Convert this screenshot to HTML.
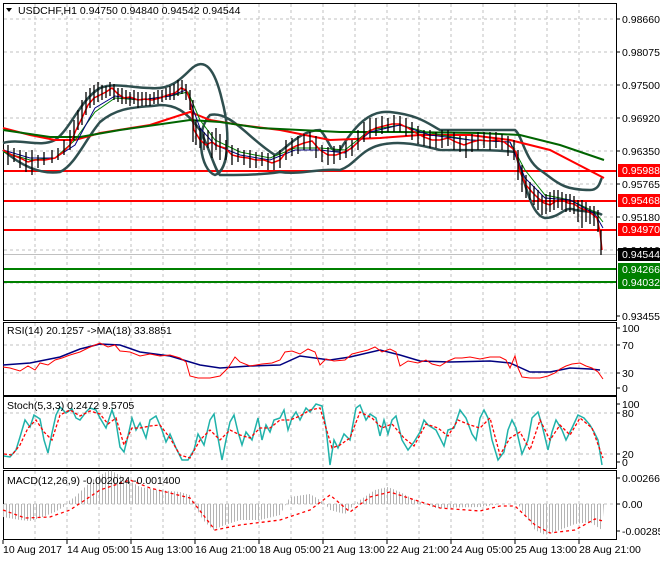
<!DOCTYPE html>
<html><head><meta charset="utf-8"><style>
body{margin:0;background:#fff;width:660px;height:560px;overflow:hidden;font-family:"Liberation Sans",sans-serif;}
svg text{font-family:"Liberation Sans",sans-serif;font-size:10.5px;}
</style></head><body>
<svg width="660" height="560" viewBox="0 0 660 560" xmlns="http://www.w3.org/2000/svg">
<defs>
<pattern id="hs" width="3" height="10" patternUnits="userSpaceOnUse"><rect x="0" y="0" width="1" height="10" fill="#b4b4b4"/></pattern>
</defs>
<rect width="660" height="560" fill="#fff"/>
<!-- grids -->
<g stroke="#c0c0c0" stroke-dasharray="3,3" stroke-width="1">
<path d="M35 4V320M67 4V320M99 4V320M131 4V320M163 4V320M195 4V320M227 4V320M259 4V320M291 4V320M323 4V320M355 4V320M387 4V320M419 4V320M451 4V320M483 4V320M515 4V320M547 4V320M579 4V320"/>
<path d="M35 323V395M67 323V395M99 323V395M131 323V395M163 323V395M195 323V395M227 323V395M259 323V395M291 323V395M323 323V395M355 323V395M387 323V395M419 323V395M451 323V395M483 323V395M515 323V395M547 323V395M579 323V395"/>
<path d="M35 398V468M67 398V468M99 398V468M131 398V468M163 398V468M195 398V468M227 398V468M259 398V468M291 398V468M323 398V468M355 398V468M387 398V468M419 398V468M451 398V468M483 398V468M515 398V468M547 398V468M579 398V468"/>
<path d="M35 471V539M67 471V539M99 471V539M131 471V539M163 471V539M195 471V539M227 471V539M259 471V539M291 471V539M323 471V539M355 471V539M387 471V539M419 471V539M451 471V539M483 471V539M515 471V539M547 471V539M579 471V539"/>
<path d="M4 19H616M4 52H616M4 85H616M4 118H616M4 151H616M4 184H616M4 217H616M4 250H616M4 283H616"/>
<path d="M4 345H616M4 373H616M4 413H616M4 454H616M4 504H616"/>
</g>
<!-- panel borders -->
<g fill="none" stroke="#000" stroke-width="1">
<rect x="3.5" y="3.5" width="613" height="317"/>
<rect x="3.5" y="322.5" width="613" height="73"/>
<rect x="3.5" y="396.5" width="613" height="72"/>
<rect x="3.5" y="470.5" width="613" height="69"/>
</g>
<!-- horizontal levels -->
<g stroke-width="2">
<path d="M4 171H616M4 201H616M4 230H616" stroke="#ff0000"/>
<path d="M4 269H616M4 282H616" stroke="#008000"/>
</g>
<path d="M4 254.5H616" stroke="#c0c0c0"/>
<!-- bollinger -->
<g fill="none" stroke="#2f4f4f" stroke-width="2.5">
<path d="M3 143 C20 138,40 148,55 140 C70 130,80 100,100 88 C115 82,130 88,150 88 C170 90,180 80,190 70 C205 55,215 70,222 100 C230 130,230 170,215 175 C200 170,195 130,210 115 C230 110,250 140,275 155 C285 150,300 130,320 130 C330 140,330 155,340 150 C355 125,370 110,390 112 C420 115,430 125,440 130 C470 130,500 130,515 130 C522 135,525 160,540 170 C555 180,560 190,590 190 C600 190,600 180,602 178"/>
<path d="M3 150 C20 165,40 175,60 172 C75 165,85 140,100 122 C120 105,140 108,160 105 C175 105,185 110,200 130 C210 150,215 170,220 175 C240 175,260 175,280 172 C300 175,320 168,340 170 C355 165,360 150,380 145 C400 140,420 145,440 150 C470 150,500 150,515 152 C525 180,530 215,545 218 C560 218,565 205,575 210 C590 212,598 212,602 215"/>
</g>
<!-- long MAs -->
<path d="M3 128 L30 135 L55 140 L75 140 L100 133 L150 125 L190 112 L210 120 L240 125 L280 130 L330 140 L380 138 L420 135 L470 135 L510 140 L550 150 L604 178" fill="none" stroke="#ff0000" stroke-width="2"/>
<path d="M3 130 L50 137 L80 137 L120 130 L190 120 L220 122 L260 128 L300 130 L340 132 L400 132 L480 133 L520 135 L560 145 L604 160" fill="none" stroke="#006400" stroke-width="2"/>
<!-- short MAs -->
<path d="M3 152 L30 160 L55 158 L75 140 L95 112 L115 98 L140 100 L170 96 L188 92 L200 120 L215 140 L240 152 L270 158 L295 148 L320 148 L345 150 L370 130 L400 125 L430 133 L470 140 L510 142 L525 170 L545 195 L570 200 L595 212 L603 222" fill="none" stroke="#008000" stroke-width="1"/>
<path d="M3 150 L30 158 L55 158 L75 145 L95 108 L115 96 L140 100 L170 96 L186 90 L200 128 L215 145 L240 155 L270 160 L295 150 L320 150 L345 153 L370 132 L400 125 L430 135 L470 140 L510 142 L525 178 L545 198 L570 200 L595 214 L603 228" fill="none" stroke="#000080" stroke-width="1"/>
<!-- price -->
<path d="M3 150 L12 155 L20 158 L28 162 L35 160 L45 160 L55 158 L62 153 L70 145 L76 130 L82 118 L88 105 L94 98 L100 95 L106 92 L112 88 L118 94 L124 98 L130 97 L138 100 L145 99 L152 100 L160 98 L168 95 L175 93 L181 88 L186 90 L190 100 L194 130 L200 140 L206 145 L212 142 L218 146 L225 148 L232 155 L240 157 L248 158 L256 160 L264 160 L272 163 L280 160 L288 150 L296 146 L304 143 L312 141 L320 150 L328 155 L336 155 L344 152 L352 148 L360 140 L368 132 L376 128 L384 126 L392 124 L400 124 L408 128 L416 133 L424 137 L432 140 L440 140 L448 138 L456 142 L464 145 L472 142 L480 140 L488 141 L496 140 L504 142 L512 148 L516 152 L520 172 L526 185 L532 192 L538 198 L544 203 L550 205 L556 201 L562 200 L568 203 L574 204 L580 208 L586 210 L592 214 L597 218 L600 232 L602 250" fill="none" stroke="#ff0000" stroke-width="1.5"/>
<g stroke="#000" stroke-width="1.3">
<path d="M8 145V165M14 148V162M20 150V168M26 152V172M32 150V175M38 155V168M44 152V165M52 150V163M58 148V160M64 140V155M70 130V150M74 120V140M78 110V130M82 100V125M86 92V115M90 88V108M94 85V105M98 82V102M102 85V100M106 86V98M110 82V96M114 84V100M118 88V102M122 88V104M126 90V104M130 92V106M134 90V104M138 92V108M142 92V106M146 92V106M150 94V106M154 92V104M158 90V104M162 90V102M166 88V100M170 86V100M174 84V100M178 80V96M182 80V94M186 84V100M190 90V110M193 100V142M196 120V145M200 128V148M204 132V150M208 130V148M212 132V158M216 128V150M220 134V160M226 140V160M232 145V165M238 148V162M244 150V165M250 150V168M256 152V168M262 152V166M268 153V170M274 155V170M280 150V168M286 140V160M292 138V156M298 136V154M304 134V150M310 132V150M316 136V158M322 145V162M328 147V165M334 146V164M340 145V160M346 142V158M352 140V156M358 130V150M364 122V142M370 118V138M376 118V136M382 116V134M388 118V132M394 115V132M400 116V132M406 118V136M412 122V140M418 126V144M424 130V146M430 130V148M436 132V148M442 130V148M448 130V146M454 132V150M460 136V152M466 136V158M472 134V152M478 132V150M484 132V148M490 132V150M496 132V148M502 134V150M508 136V156M514 140V160M518 150V180M522 165V192M526 175V198M530 182V200M534 186V205M538 190V210M542 195V215M546 194V214M550 192V212M554 190V210M558 190V208M562 192V210M566 194V212M570 194V212M574 196V214M578 200V222M582 200V228M586 202V222M590 206V224M594 206V226M598 210V232M601 230V255"/>
</g>
<!-- RSI -->
<path d="M3 365 L30 363 L60 357 L80 349 L100 344 L120 345 L140 352 L170 356 L200 365 L220 368 L250 366 L280 365 L300 356 L330 360 L350 357 L380 350 L400 355 L420 361 L450 362 L490 361 L510 363 L530 372 L550 372 L570 368 L590 369 L600 370" fill="none" stroke="#000080" stroke-width="1.5"/>
<path d="M3 367 L10 368 L20 371 L28 366 L35 370 L40 363 L48 365 L55 360 L62 358 L70 355 L80 352 L88 348 L95 345 L100 343 L108 347 L115 345 L120 351 L130 352 L140 356 L150 354 L160 356 L170 355 L180 358 L186 362 L190 376 L198 378 L210 378 L220 376 L228 368 L235 357 L240 362 L250 366 L262 364 L272 363 L280 360 L285 352 L292 351 L300 354 L308 349 L315 352 L320 365 L326 359 L334 361 L345 360 L352 354 L360 352 L368 350 L375 347 L382 352 L390 349 L396 352 L400 366 L408 361 L418 363 L426 360 L432 364 L440 366 L448 361 L455 358 L462 358 L470 357 L480 359 L490 357 L500 357 L506 360 L510 368 L515 356 L518 368 L522 377 L530 378 L540 378 L548 376 L555 373 L560 369 L566 366 L572 364 L580 363 L586 366 L592 368 L598 372 L603 379" fill="none" stroke="#ff0000" stroke-width="1"/>
<!-- Stoch -->
<path d="M4 456 L10 457 L16 450 L20 437 L25 420 L30 427 L34 415 L40 419 L44 440 L48 453 L52 433 L56 415 L60 407 L66 413 L72 409 L76 418 L80 420 L86 412 L90 408 L96 410 L100 418 L106 428 L112 410 L116 422 L120 447 L124 452 L128 436 L132 418 L136 430 L140 423 L146 438 L150 420 L156 416 L162 430 L166 442 L170 434 L176 448 L182 460 L188 460 L194 450 L198 434 L204 445 L210 420 L214 414 L218 438 L222 460 L226 440 L230 422 L234 415 L238 432 L242 445 L246 432 L252 440 L258 418 L262 440 L266 425 L270 432 L274 420 L280 418 L284 410 L288 430 L292 418 L296 412 L300 420 L306 408 L310 412 L316 404 L322 406 L326 428 L330 465 L334 440 L338 448 L344 434 L350 440 L356 408 L360 405 L366 420 L370 414 L376 418 L380 436 L384 420 L388 434 L392 420 L396 416 L402 440 L408 450 L414 442 L420 432 L424 420 L428 425 L436 430 L444 446 L448 430 L454 428 L460 410 L466 418 L472 434 L476 440 L480 418 L484 410 L488 418 L492 440 L498 460 L504 452 L508 430 L512 420 L516 428 L522 454 L528 440 L532 418 L538 412 L542 425 L548 450 L552 432 L556 420 L562 430 L566 440 L572 428 L578 415 L584 418 L590 425 L594 432 L598 440 L602 465" fill="none" stroke="#20b2aa" stroke-width="1.5"/>
<path d="M4 454 L12 455 L20 445 L28 428 L36 420 L44 432 L52 440 L60 415 L70 410 L80 416 L90 411 L100 414 L108 424 L116 418 L124 445 L132 428 L140 428 L150 426 L160 425 L170 438 L180 455 L190 458 L200 440 L210 430 L220 440 L230 430 L240 435 L250 438 L260 428 L270 428 L280 420 L290 420 L300 416 L310 410 L320 408 L332 448 L340 445 L350 438 L360 412 L372 418 L382 428 L392 424 L404 438 L414 446 L426 424 L438 428 L448 436 L458 420 L470 425 L480 428 L490 418 L500 455 L510 438 L520 432 L530 450 L540 420 L550 440 L560 425 L570 435 L580 418 L592 428 L603 458" fill="none" stroke="#ff0000" stroke-width="1.3" stroke-dasharray="3,2"/>
<!-- MACD -->
<path d="M3 504 L3 517 L20 520 L30 521 L40 518 L55 512 L65 506 L70 500 L75 497 L85 487 L95 478 L110 470 L125 478 L140 487 L160 490 L180 492 L190 495 L195 506 L203 520 L213 530 L225 525 L240 520 L260 520 L280 515 L286 504 L290 497 L310 494 L320 500 L326 505 L330 510 L345 514 L355 504 L360 500 L375 490 L388 487 L400 492 L415 500 L425 504 L435 508 L480 507 L500 504 L518 504 L525 515 L535 530 L545 535 L560 530 L575 524 L590 522 L602 530 L604 504 Z" fill="url(#hs)"/>
<path d="M3 510 L25 518 L50 517 L70 510 L100 490 L130 480 L150 488 L190 498 L215 530 L240 525 L280 520 L310 510 L330 495 L350 512 L370 497 L390 492 L415 500 L440 508 L480 511 L500 506 L515 506 L535 525 L550 533 L575 530 L595 519 L603 521" fill="none" stroke="#ff0000" stroke-width="1.3" stroke-dasharray="3,3"/>
<!-- titles -->
<path d="M6 8 L12 8 L9 12 Z" fill="#000"/>
<text x="18" y="14">USDCHF,H1  0.94750 0.94840 0.94542 0.94544</text>
<text x="7" y="334">RSI(14) 20.1257  -&gt;MA(18) 33.8851</text>
<text x="7" y="409">Stoch(5,3,3) 0.2472 9.5705</text>
<text x="7" y="484">MACD(12,26,9) -0.002024 -0.001400</text>
<!-- right axis -->
<g stroke="#000"><path d="M616 19h4M616 52h4M616 85h4M616 118h4M616 151h4M616 184h4M616 217h4M616 250h4M616 316h4M616 328h4M616 345h4M616 373h4M616 388h4M616 404h4M616 413h4M616 454h4M616 462h4M616 478h4M616 504h4M616 531h4"/></g>
<g fill="#000">
<text x="622" y="23">0.98660</text><text x="622" y="56">0.98075</text><text x="622" y="89">0.97500</text><text x="622" y="122">0.96920</text><text x="622" y="155">0.96350</text><text x="622" y="188">0.95765</text><text x="622" y="221">0.95180</text><text x="622" y="254">0.94610</text><text x="622" y="320">0.93455</text>
<text x="622" y="332">100</text><text x="622" y="349">70</text><text x="622" y="377">30</text><text x="622" y="392">0</text>
<text x="622" y="408">100</text><text x="622" y="417">80</text><text x="622" y="458">20</text><text x="622" y="466">0</text>
<text x="622" y="482">0.002668</text><text x="622" y="508">0.00</text><text x="622" y="535">-0.002858</text>
</g>
<rect x="618" y="164" width="42" height="13" fill="#ff0000"/><text x="622" y="174" fill="#fff">0.95988</text>
<rect x="618" y="194" width="42" height="13" fill="#ff0000"/><text x="622" y="204" fill="#fff">0.95468</text>
<rect x="618" y="223" width="42" height="13" fill="#ff0000"/><text x="622" y="233" fill="#fff">0.94970</text>
<rect x="618" y="248" width="42" height="13" fill="#000"/><text x="622" y="258" fill="#fff">0.94544</text>
<rect x="618" y="263" width="42" height="13" fill="#008000"/><text x="622" y="273" fill="#fff">0.94266</text>
<rect x="618" y="276" width="42" height="13" fill="#008000"/><text x="622" y="286" fill="#fff">0.94032</text>
<!-- bottom axis -->
<g stroke="#000"><path d="M3 540v4M67 540v4M131 540v4M195 540v4M259 540v4M323 540v4M387 540v4M451 540v4M515 540v4M579 540v4"/></g>
<g fill="#000">
<text x="3" y="553">10 Aug 2017</text><text x="67" y="553">14 Aug 05:00</text><text x="131" y="553">15 Aug 13:00</text><text x="195" y="553">16 Aug 21:00</text><text x="259" y="553">18 Aug 05:00</text><text x="323" y="553">21 Aug 13:00</text><text x="387" y="553">22 Aug 21:00</text><text x="451" y="553">24 Aug 05:00</text><text x="515" y="553">25 Aug 13:00</text><text x="579" y="553">28 Aug 21:00</text>
</g>
</svg>
</body></html>
